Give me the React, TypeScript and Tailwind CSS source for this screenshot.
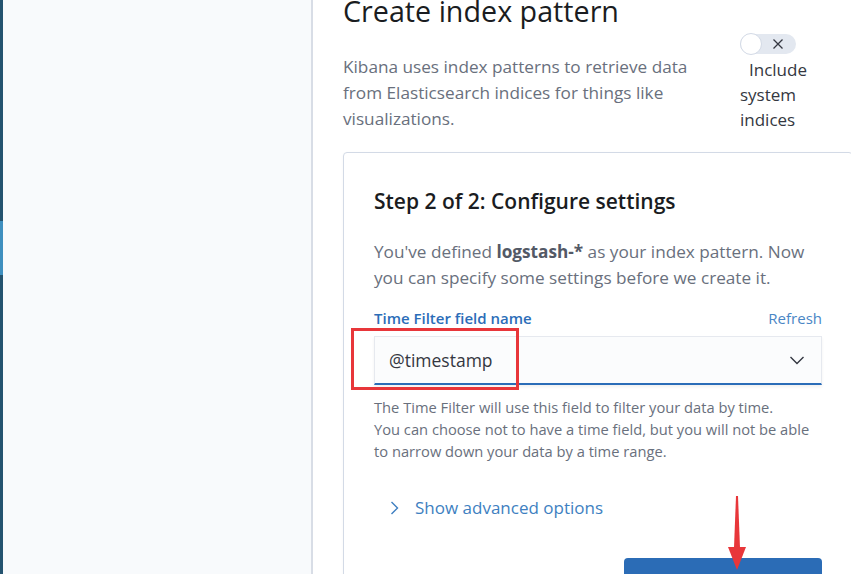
import { useState } from "react";

function NavStrip() {
  return (
    <div className="flex w-[3px] shrink-0 flex-col bg-[#24536f]">
      <div className="h-[221px]" />
      <div className="h-[54px] bg-[#3f8fbf]" />
    </div>
  );
}

function Toggle({ on, onChange }: { on: boolean; onChange: () => void }) {
  return (
    <button
      type="button"
      onClick={onChange}
      className="relative flex h-[20px] w-[56px] items-center rounded-full bg-[#e3e8f0]"
    >
      <span className="absolute left-0 top-[-1px] h-[22px] w-[22px] rounded-full border border-[#d3dae6] bg-white" />
      <svg
        className="absolute left-[32px] top-[4px]"
        width="12"
        height="12"
        viewBox="0 0 12 12"
        fill="none"
        stroke="#343741"
        strokeWidth="1.3"
      >
        <path d="M1.5 1.5l9 9M10.5 1.5l-9 9" />
      </svg>
    </button>
  );
}

export default function App() {
  const [includeSystem, setIncludeSystem] = useState(false);

  return (
    <div
      className="relative flex h-screen w-full overflow-hidden bg-white"
      style={{ fontFamily: '"Open Sans", "Noto Sans", sans-serif' }}
    >
      <NavStrip />
      {/* side nav */}
      <div className="w-[310px] shrink-0 border-r-2 border-[#d8dde6] bg-[#f8fafc]" />

      {/* main */}
      <div className="ml-[30px] w-[510px] shrink-0">
        <h1 className="mt-[-6px] text-[28.7px] font-medium leading-[34px] text-[#1a1c21]">Create index pattern</h1>

        <div className="mt-[6px] flex">
          <p className="w-[365px] pt-[20px] text-[17.2px] leading-[26px] text-[#69707d]">
            Kibana uses index patterns to retrieve data from Elasticsearch indices for things like
            visualizations.
          </p>
          <div className="ml-[32px] w-[72px]">
            <Toggle on={includeSystem} onChange={() => setIncludeSystem((v) => !v)} />
            <div className="mt-[3px] text-[17px] leading-[25px] text-[#343741]">
              <span className="pl-[9px]">Include system indices</span>
            </div>
          </div>
        </div>

        {/* step card */}
        <div className="mt-[20px] rounded-[4px] border border-[#d3dae6] bg-white px-[30px] pt-[34px] pb-[40px] shadow-[0_1px_3px_rgba(0,0,0,0.04)]">
          <h2 className="text-[21px] font-semibold leading-[28px] text-[#1a1c21]">
            Step 2 of 2: Configure settings
          </h2>
          <p className="mt-[24px] text-[17.2px] leading-[26px] text-[#69707d]">
            You've defined <strong className="font-bold text-[#535966]">logstash-*</strong> as your index
            pattern. Now you can specify some settings before we create it.
          </p>

          <div className="mt-[17px] flex items-center justify-between text-[15px] leading-[20px]">
            <span className="font-semibold text-[#2b6db8]">Time Filter field name</span>
            <span className="text-[#4a86c5]">Refresh</span>
          </div>
          <div className="mt-[8px] flex h-[49px] items-center justify-between border border-b-2 border-[#e6e9ef] border-b-[#2b6db8] bg-[#fbfcfd] pl-[14px] pr-[16px] shadow-[0_2px_3px_rgba(0,0,0,0.06)]">
            <span className="text-[17.5px] text-[#343741]">@timestamp</span>
            <svg width="16" height="16" viewBox="0 0 16 16" fill="none" stroke="#343741" strokeWidth="1.4">
              <path d="M1.5 5l6.5 6.5L14.5 5" />
            </svg>
          </div>
          <p className="mt-[11px] text-[14.7px] leading-[22px] text-[#69707d]">
            The Time Filter will use this field to filter your data by time.
            <br />
            You can choose not to have a time field, but you will not be able to narrow down your data by
            a time range.
          </p>

          <button type="button" className="mt-[34px] flex items-center gap-[13px] pl-[12px] text-[17px] leading-[24px] text-[#3e7fc1]">
            <svg width="16" height="16" viewBox="0 0 16 16" fill="none" stroke="#3e7fc1" strokeWidth="1.4">
              <path d="M5.5 2l6 6-6 6" />
            </svg>
            Show advanced options
          </button>

          <div className="mt-[38px] flex justify-end">
            <div className="h-[44px] w-[198px] rounded-[4px] bg-[#2b6cb6]" />
          </div>
        </div>
      </div>

      {/* annotations */}
      <div className="pointer-events-none absolute left-[351px] top-[328px] h-[62px] w-[168px] border-[3px] border-[#e8363a]" />
      <svg className="pointer-events-none absolute left-[726px] top-[496px]" width="22" height="78" viewBox="0 0 22 78">
        <path d="M10 0h2l2 52h-6z" fill="#e8363a" />
        <path d="M2 51h18l-9 23z" fill="#e8363a" />
      </svg>
    </div>
  );
}
